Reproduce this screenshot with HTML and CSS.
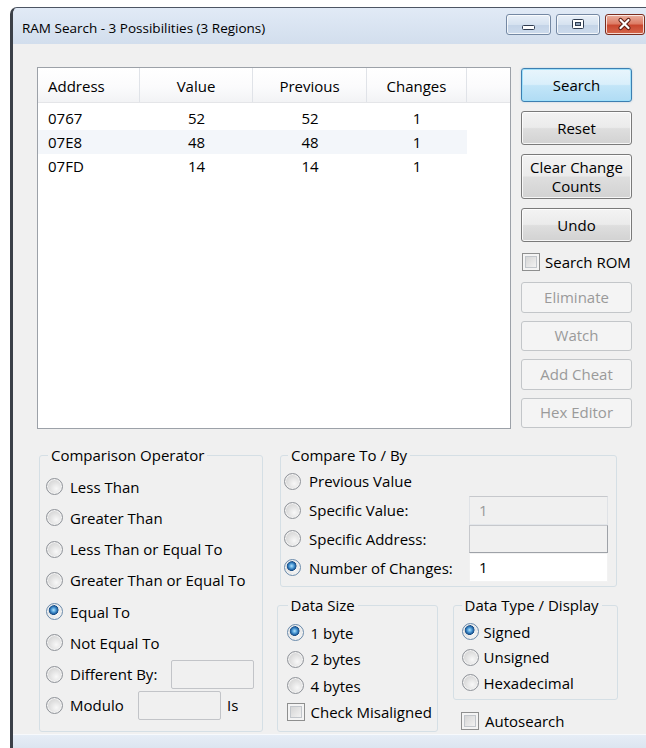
FILE: index.html
```html
<!DOCTYPE html>
<html lang="en">
<head>
<meta charset="utf-8">
<title>RAM Search</title>
<link rel="stylesheet" href="styles.css">
</head>
<body>
<div class="window">
  <header class="titlebar">
    <span class="caption">RAM Search - 3 Possibilities (3 Regions)</span>
    <div class="caption-buttons">
      <button class="cap-btn cap-min" aria-label="Minimize">
        <svg width="45" height="21" viewBox="0 0 45 21"><rect x="16.5" y="11.5" width="12" height="4" rx="1" fill="#fff" stroke="#2f3c50"/></svg>
      </button>
      <button class="cap-btn cap-max" aria-label="Maximize">
        <svg width="44" height="21" viewBox="0 0 44 21"><rect x="16.5" y="5.5" width="11" height="9" rx="1" fill="#fff" stroke="#2f3c50"/><rect x="19.5" y="8.5" width="5" height="3" fill="#8fa2ba" stroke="#2f3c50"/></svg>
      </button>
      <button class="cap-btn cap-close" aria-label="Close">
        <svg width="40" height="21" viewBox="0 0 40 21"><path d="M15.5 6 L23.5 14 M23.5 6 L15.5 14" stroke="#5b1a10" stroke-width="4.2" stroke-linecap="round"/><path d="M15.5 6 L23.5 14 M23.5 6 L15.5 14" stroke="#fff" stroke-width="2.2" stroke-linecap="round"/></svg>
      </button>
    </div>
  </header>

  <main class="client">
    <div class="top">
      <div class="listview">
        <div class="lv-header">
          <div class="lv-hcell lv-left">Address</div>
          <div class="lv-hcell">Value</div>
          <div class="lv-hcell">Previous</div>
          <div class="lv-hcell">Changes</div>
          <div class="lv-hcell lv-fill"></div>
        </div>
        <div class="lv-body">
          <div class="lv-row"><span class="lv-left">0767</span><span>52</span><span>52</span><span>1</span></div>
          <div class="lv-row lv-row-hot"><span class="lv-left">07E8</span><span>48</span><span>48</span><span>1</span></div>
          <div class="lv-row"><span class="lv-left">07FD</span><span>14</span><span>14</span><span>1</span></div>
        </div>
      </div>

      <div class="actions">
        <button class="btn btn-default">Search</button>
        <button class="btn">Reset</button>
        <button class="btn btn-tall">Clear Change<br>Counts</button>
        <button class="btn">Undo</button>
        <label class="check check-rom"><span class="box"></span>Search ROM</label>
        <div class="actions-disabled">
          <button class="btn btn-off" disabled>Eliminate</button>
          <button class="btn btn-off" disabled>Watch</button>
          <button class="btn btn-off" disabled>Add Cheat</button>
          <button class="btn btn-off" disabled>Hex Editor</button>
        </div>
      </div>
    </div>

    <div class="bottom">
      <fieldset class="group group-op">
        <legend>Comparison Operator</legend>
        <label class="opt"><span class="radio"></span>Less Than</label>
        <label class="opt"><span class="radio"></span>Greater Than</label>
        <label class="opt"><span class="radio"></span>Less Than or Equal To</label>
        <label class="opt"><span class="radio"></span>Greater Than or Equal To</label>
        <label class="opt"><span class="radio on"></span>Equal To</label>
        <label class="opt"><span class="radio"></span>Not Equal To</label>
        <div class="opt"><span class="radio"></span>Different By:<span class="edit edit-off edit-diff"></span></div>
        <div class="opt"><span class="radio"></span><span class="mod-label">Modulo</span><span class="edit edit-off edit-mod"></span><span class="is">Is</span></div>
      </fieldset>

      <div class="right">
        <fieldset class="group group-cmp">
          <legend>Compare To / By</legend>
          <label class="opt opt-first"><span class="radio"></span>Previous Value</label>
          <div class="opt opt-box"><span class="radio"></span>Specific Value:<span class="edit edit-off edit-cmp">1</span></div>
          <div class="opt opt-box"><span class="radio"></span>Specific Address:<span class="edit edit-off edit-cmp edit-sunk"></span></div>
          <div class="opt opt-box opt-last"><span class="radio on"></span>Number of Changes:<span class="edit edit-cmp edit-white">1</span></div>
        </fieldset>

        <div class="data-row">
          <fieldset class="group group-size">
            <legend>Data Size</legend>
            <label class="opt"><span class="radio on"></span>1 byte</label>
            <label class="opt"><span class="radio"></span>2 bytes</label>
            <label class="opt"><span class="radio"></span>4 bytes</label>
            <label class="opt check"><span class="box"></span>Check Misaligned</label>
          </fieldset>

          <div class="type-col">
            <fieldset class="group group-type">
              <legend>Data Type / Display</legend>
              <label class="opt"><span class="radio on"></span>Signed</label>
              <label class="opt"><span class="radio"></span>Unsigned</label>
              <label class="opt"><span class="radio"></span>Hexadecimal</label>
            </fieldset>
            <label class="check check-auto"><span class="box"></span>Autosearch</label>
          </div>
        </div>
      </div>
    </div>
  </main>
  <div class="frame-bottom"></div>
</div>
</body>
</html>
```

FILE: styles.css
```css
* { box-sizing: border-box; }

html, body {
  margin: 0;
  height: 100%;
}

body {
  background: #fff;
  overflow: hidden;
  font-family: "Open Sans", "Noto Sans", sans-serif;
  font-size: 15px;
  color: #000;
}

/* ---------- window frame ---------- */
.window {
  margin: 7px 0 0 10px;
  width: 683px;
  height: 741px;
  border-left: 3px solid #3b4048;
  border-top: 1px solid #4c5563;
  border-top-left-radius: 7px;
  display: flex;
  flex-direction: column;
  background: #dbe5f1;
  overflow: hidden;
}

.titlebar {
  height: 36px;
  flex: none;
  display: flex;
  align-items: flex-start;
  padding: 0 48px 0 9px;
  background: linear-gradient(#e1eaf6, #d2deed);
}

.caption {
  font-size: 13.5px;
  line-height: 20px;
  margin-top: 10px;
  white-space: nowrap;
}

.caption-buttons {
  margin-left: auto;
  margin-top: 6px;
  display: flex;
  gap: 5px;
}

.cap-btn {
  height: 21px;
  padding: 0;
  border: 1px solid #7488a3;
  border-radius: 3px;
  background: linear-gradient(#e9f0f8 0%, #d6e2f0 50%, #c3d3e7 51%, #cddbec 100%);
  box-shadow: inset 0 0 0 1px rgba(255,255,255,0.75);
  display: block;
}
.cap-btn svg { display: block; margin: -1px; }
.cap-min { width: 45px; }
.cap-max { width: 44px; }
.cap-close {
  width: 40px;
  border-color: #7a2d1f;
  background: linear-gradient(#eab0a0 0%, #dd7d66 45%, #c9472f 55%, #d5674c 100%);
}

.client {
  height: 690px;
  flex: none;
  background: #f0f0f0;
  padding: 23px 0 0 24px;
}

.frame-bottom {
  flex: 1;
  border-top: 1px solid #f7f9fc;
  background: linear-gradient(#e6edf6, #dce5f0);
}

/* ---------- list + buttons ---------- */
.top {
  display: flex;
  gap: 10px;
}

.listview {
  width: 474px;
  height: 362px;
  border: 1px solid #9ca1a8;
  background: #fff;
}

.lv-header {
  display: grid;
  grid-template-columns: 102px 113px 114px 100px 1fr;
  height: 35px;
  background: linear-gradient(#ffffff 0%, #fbfbfc 55%, #f2f3f5 100%);
  border-bottom: 1px solid #e4e5e8;
}

.lv-hcell {
  display: flex;
  align-items: center;
  justify-content: center;
  border-right: 1px solid #e0e3e8;
  padding-top: 2px;
}
.lv-hcell.lv-fill { border-right: 0; }
.lv-hcell.lv-left { justify-content: flex-start; padding-left: 10px; }

.lv-body { padding-top: 3px; }

.lv-row {
  display: grid;
  grid-template-columns: 102px 113px 114px 100px;
  width: 429px;
  height: 24px;
  align-items: center;
  text-align: center;
}
.lv-row .lv-left { text-align: left; padding-left: 10px; }
.lv-row-hot { background: #f3f6fa; }

.actions {
  width: 111px;
  display: flex;
  flex-direction: column;
  gap: 9px;
  padding-top: 1px;
}

.btn {
  height: 34px;
  padding: 0;
  font: inherit;
  color: #000;
  border: 1px solid #7a7a7a;
  border-radius: 3px;
  background: linear-gradient(#f3f3f3 0%, #ebebeb 48%, #dedede 52%, #d2d2d2 100%);
  box-shadow: inset 0 0 0 1px rgba(255,255,255,0.8);
  line-height: 19px;
}
.btn-tall { height: 45px; }
.btn-default {
  border-color: #3c7fb1;
  background: linear-gradient(#e8f5fc 0%, #d9effb 48%, #c2e5f8 52%, #b0dcf4 100%);
  box-shadow: inset 0 0 0 1px #9fe0fb, 0 0 2px rgba(60,127,177,0.35);
}
.btn-off {
  height: 30.5px;
  color: #9a9a9a;
  border-color: #c3c6c9;
  background: #f4f4f4;
  box-shadow: none;
}

.actions-disabled {
  display: flex;
  flex-direction: column;
  gap: 8px;
}

/* ---------- checks and radios ---------- */
.check {
  display: flex;
  align-items: center;
  gap: 6px;
  white-space: nowrap;
}
.check-rom { height: 22px; padding-left: 1px; gap: 5px; }

.box {
  width: 18px;
  height: 18px;
  flex: none;
  border: 1px solid #8e8f8f;
  background: linear-gradient(135deg, #cdcdcd 0%, #e6e6e6 55%, #fafafa 100%);
  box-shadow: inset 0 0 0 2px #f4f4f4, inset 0 0 0 3px #c2c6cb;
}

.radio {
  width: 17px;
  height: 17px;
  flex: none;
  border-radius: 50%;
  border: 1px solid #8f9399;
  background: radial-gradient(circle at 62% 64%, #f8f8f8 0%, #e2e2e2 45%, #c9c9c9 100%);
  box-shadow: inset 0 0 0 1px #f3f3f3;
}
.radio.on {
  border-color: #6b8bab;
  background:
    radial-gradient(circle at 44% 40%, #b6e2fa 0px, #5aa6dd 2px, #2b70b0 3.5px, #1b4f86 4.6px, rgba(27,79,134,0) 5.2px),
    radial-gradient(circle at 60% 62%, #fbfbfb 0%, #e4e4e4 50%, #cbd0d6 100%);
}

.opt {
  display: flex;
  align-items: center;
  gap: 7px;
  white-space: nowrap;
}

/* ---------- group boxes ---------- */
.bottom {
  display: flex;
  margin-top: 16px;
  padding-left: 2px;
}

.group {
  margin: 0;
  min-width: 0;
  border: 1px solid #d5dfe5;
  border-radius: 3px;
}
.group legend {
  padding: 0 3px;
  height: 20px;
  line-height: 20px;
}

.group-op {
  width: 224px;
  padding: 6px 8px 7px 6px;
}
.group-op legend { margin-left: 2px; }
.group-op .opt { height: 31.25px; }

.edit {
  display: block;
  height: 29px;
  border: 1px solid #c2c4c8;
  border-radius: 2px;
  background: #f0f0f0;
  padding-left: 9px;
  line-height: 27px;
}
.edit-off { color: #9a9a9a; }
.edit-diff { width: 83px; margin-left: auto; }
.mod-label { width: 61px; }
.edit-mod { width: 83px; }
.is { margin-left: -1px; }

.right {
  margin-left: 14px;
  width: 341px;
}

.group-cmp {
  width: 337px;
  margin-left: 3px;
  padding: 1px 8px 4px 3px;
}
.group-cmp legend { margin-left: 4px; }
.group-cmp .opt { gap: 8px; height: 28.5px; }
.group-cmp .opt-first { height: 30px; }
.group-cmp .opt-last { height: 29px; }
.edit-cmp {
  width: 139px;
  height: 100%;
  margin-left: auto;
  border-color: #c6c8cc #dfe2e6 #e3e6ea #dfe2e6;
  border-radius: 0;
}
.edit-sunk { border-color: #c6c8cc #9ea2a8 #9ea2a8 #c6c8cc; }
.edit-white { background: #fff; color: #000; border-color: #f2f2f2; }

.data-row {
  display: flex;
  margin-top: 8px;
}

.group-size {
  width: 161px;
  padding: 4.5px 6px 5px 8.5px;
}
.group-size legend { margin-left: 1px; }
.group-size .opt { height: 26.5px; }
.group-size .check { gap: 6px; }

.type-col {
  margin-left: 15px;
  width: 165px;
}

.group-type {
  width: 165px;
  padding: 4px 6px 3.5px 7.5px;
}
.group-type .opt { height: 25.5px; gap: 5px; }

.check-auto {
  height: 21px;
  margin-top: 10px;
  padding-left: 8px;
}
```
